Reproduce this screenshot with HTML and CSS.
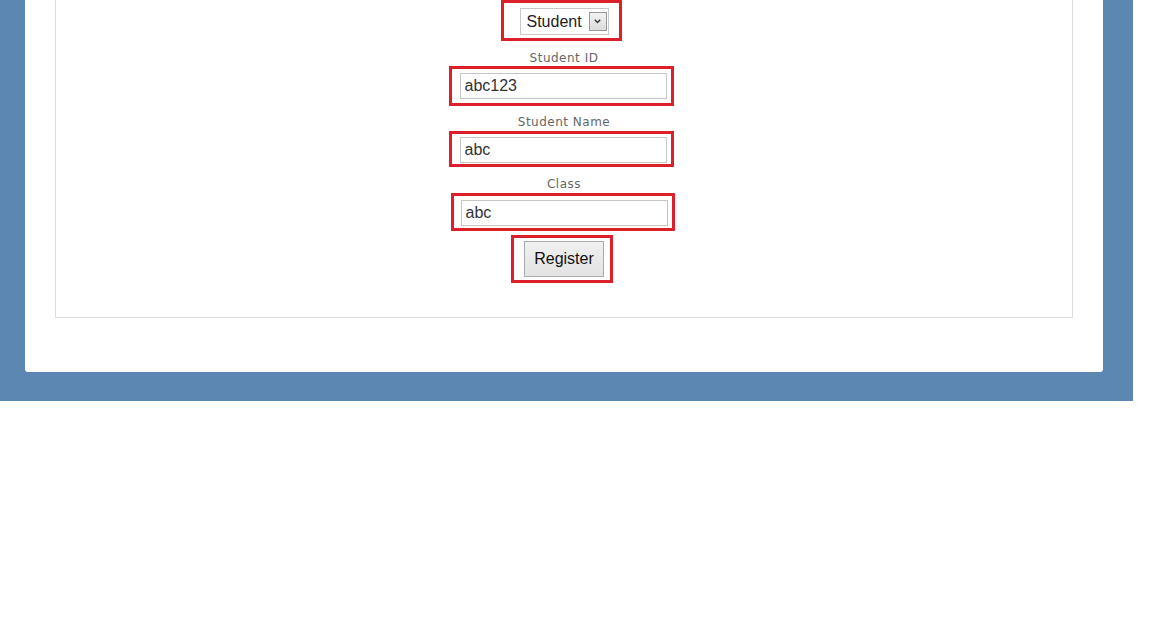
FILE: index.html
```html
<!DOCTYPE html>
<html>
<head>
<meta charset="utf-8">
<link rel="stylesheet" href="styles.css">
</head>
<body>
<div class="frame">
  <div class="panel">
    <div class="box">
      <form class="form">
        <div class="mark mark-select">
          <div class="select">
            <span class="select-text">Student</span>
            <span class="select-btn">
              <svg width="7" height="5" viewBox="0 0 7 5"><path d="M0.8 0.8 L3.5 3.6 L6.2 0.8" fill="none" stroke="#333" stroke-width="1.4"/></svg>
            </span>
          </div>
        </div>
        <label class="label label-1">Student ID</label>
        <div class="mark mark-id"><input class="input" type="text" value="abc123"></div>
        <label class="label label-2">Student Name</label>
        <div class="mark mark-name"><input class="input" type="text" value="abc"></div>
        <label class="label label-3">Class</label>
        <div class="mark mark-class"><input class="input" type="text" value="abc"></div>
        <div class="mark mark-btn"><button class="btn" type="button">Register</button></div>
      </form>
    </div>
  </div>
</div>
</body>
</html>
```
FILE: styles.css
```css
html, body {
  margin: 0;
  padding: 0;
  background: #ffffff;
}
body {
  width: 1160px;
  height: 623px;
  overflow: hidden;
}
.frame {
  width: 1133px;
  height: 401px;
  box-sizing: border-box;
  background: #5b87b2;
  padding: 0 30px 29px 25px;
}
.panel {
  height: 372px;
  box-sizing: border-box;
  background: #ffffff;
  border-radius: 0 0 3px 3px;
  padding: 0 30px 0 30px;
}
.box {
  height: 318px;
  box-sizing: border-box;
  border: 1px solid #dcdcdc;
  border-top: none;
}
.form {
  display: flex;
  flex-direction: column;
  align-items: center;
  margin: 0;
}
.mark {
  border: 3px solid #dc1f2b;
  display: flex;
}
.mark-select {
  width: 121px;
  height: 41px;
  box-sizing: border-box;
  padding: 5px 10px 0 16px;
  margin-right: 6px;
}
.select {
  width: 89px;
  height: 27px;
  box-sizing: border-box;
  border: 1px solid #c8c8c8;
  display: flex;
  align-items: center;
  justify-content: space-between;
  padding: 0 1px 0 6px;
  font-family: "Liberation Sans", Arial, sans-serif;
  font-size: 16px;
  color: #222;
  background: #fff;
}
.select-btn {
  width: 18px;
  height: 19px;
  box-sizing: border-box;
  border: 1px solid #9a9a9a;
  background: linear-gradient(#f2f2f2, #dcdcdc);
  display: flex;
  align-items: center;
  justify-content: center;
}
.label {
  font-family: "DejaVu Sans", sans-serif;
  font-size: 12px;
  letter-spacing: 0.5px;
  line-height: 14px;
  color: #666;
}
.label-1 { margin-top: 10px; margin-bottom: 1px; }
.label-2 { margin-top: 9px; margin-bottom: 2px; }
.label-3 { margin-top: 10px; margin-bottom: 2px; }
.mark-id {
  width: 225px;
  height: 40px;
  box-sizing: border-box;
  padding: 4px 4px 0 8px;
  margin-right: 6px;
}
.mark-name {
  width: 225px;
  height: 36px;
  box-sizing: border-box;
  padding: 3px 4px 0 8px;
  margin-right: 6px;
}
.mark-class {
  width: 224px;
  height: 38px;
  box-sizing: border-box;
  padding: 4px 5px 0 7px;
  margin-right: 3px;
}
.input {
  width: 207px;
  height: 26px;
  box-sizing: border-box;
  border: 1px solid #c6c6c6;
  padding: 0 4px;
  margin: 0;
  font-family: "Liberation Sans", Arial, sans-serif;
  font-size: 16px;
  color: #333;
  outline: none;
  background: #fff;
}
.mark-btn {
  width: 102px;
  height: 48px;
  box-sizing: border-box;
  padding: 3px 6px 0 10px;
  margin-top: 4px;
  margin-right: 4px;
}
.btn {
  width: 80px;
  height: 36px;
  box-sizing: border-box;
  border: 1px solid #acacac;
  background: linear-gradient(#f0f0f0, #e3e3e3);
  font-family: "Liberation Sans", Arial, sans-serif;
  font-size: 16px;
  color: #111;
  padding: 0;
  margin: 0;
  border-radius: 0;
}
```
